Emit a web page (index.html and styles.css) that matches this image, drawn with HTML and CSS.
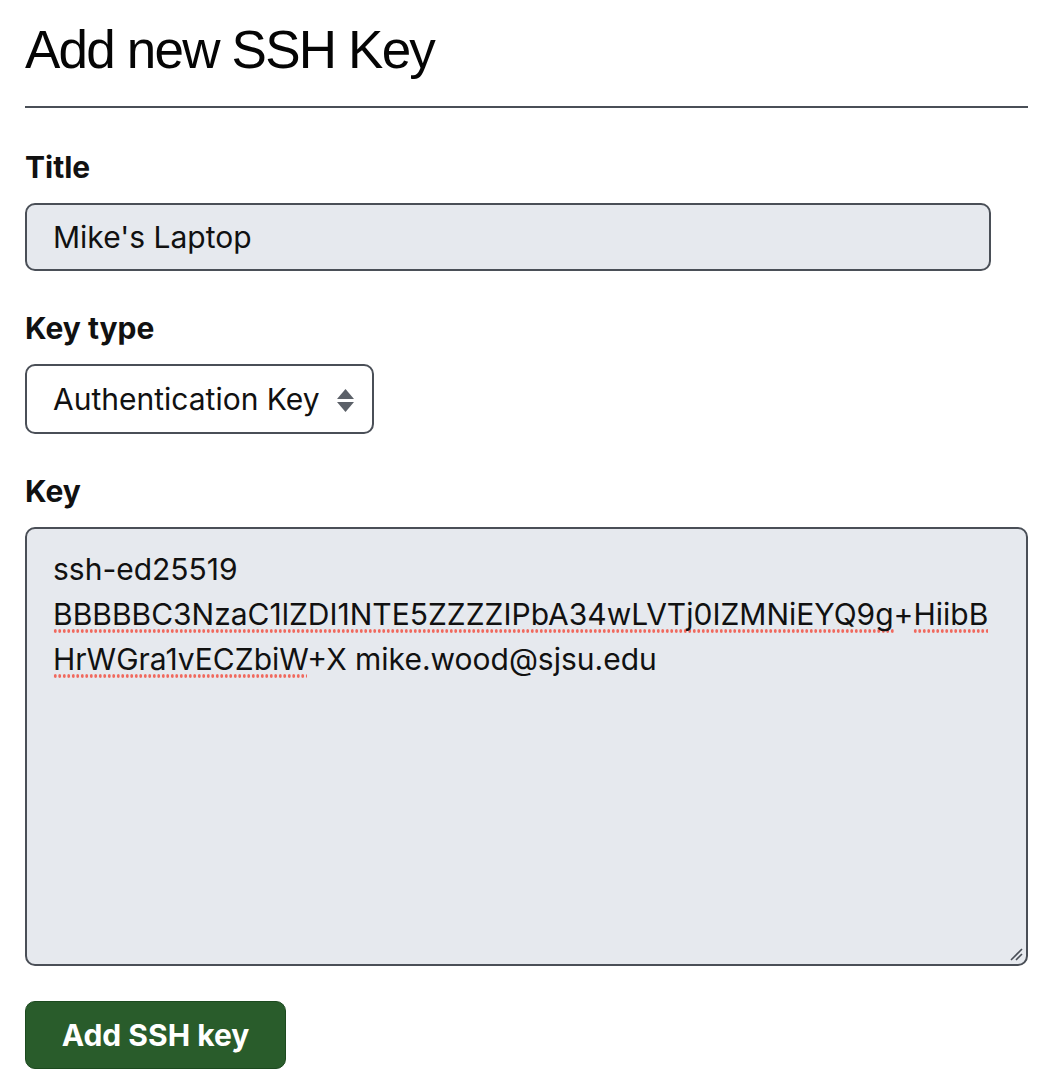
FILE: index.html
```html
<!DOCTYPE html>
<html lang="en">
<head>
<meta charset="utf-8">
<title>Add new SSH Key</title>
<link rel="stylesheet" href="styles.css">
</head>
<body>
<main class="page">
  <h1 class="heading">Add new SSH Key</h1>
  <form class="form">
    <div class="field">
      <label class="label">Title</label>
      <div class="input">Mike's Laptop</div>
    </div>
    <div class="field">
      <label class="label">Key type</label>
      <div class="select">
        <span class="select-text">Authentication Key</span>
        <svg class="select-arrows" width="17" height="23" viewBox="0 0 17 23" aria-hidden="true">
          <path d="M8.5 0 L17 10 L0 10 Z" fill="#5b6068"/>
          <path d="M0 13 L17 13 L8.5 23 Z" fill="#5b6068"/>
        </svg>
      </div>
    </div>
    <div class="field">
      <label class="label">Key</label>
      <div class="textarea">
        <div class="key-text">ssh-ed25519<br><span class="spell">BBBBBC3NzaC1lZDI1NTE5ZZZZIPbA34wLVTj0IZMNiEYQ9g</span>+<span class="spell">HiibB</span><br><span class="spell">HrWGra1vECZbiW</span>+X mike.wood@sjsu.edu</div>
        <svg class="grip" width="14" height="14" viewBox="0 0 14 14" aria-hidden="true">
          <line x1="2" y1="13" x2="13" y2="2" stroke="#4a4f57" stroke-width="1.6"/>
          <line x1="7" y1="13" x2="13" y2="7" stroke="#4a4f57" stroke-width="1.6"/>
        </svg>
      </div>
    </div>
    <div class="actions">
      <button type="button" class="btn">Add SSH key</button>
    </div>
  </form>
</main>
</body>
</html>
```

FILE: styles.css
```css
html, body {
  margin: 0;
  padding: 0;
  background: #ffffff;
}

body {
  font-family: Inter, "Liberation Sans", Arial, sans-serif;
  color: #111111;
}

.page {
  width: 1003px;
  margin-left: 25px;
  padding-top: 17px;
}

.heading {
  margin: 0;
  font-family: "Liberation Sans", Arial, sans-serif;
  font-size: 53px;
  font-weight: 400;
  line-height: 65px;
  padding-bottom: 24px;
  border-bottom: 2px solid #4a4f57;
  color: #050505;
  letter-spacing: -1.8px;
}

.form {
  display: flex;
  flex-direction: column;
  gap: 35px;
  padding-top: 37px;
}

.field {
  display: flex;
  flex-direction: column;
  gap: 13px;
}

.label {
  font-size: 30px;
  line-height: 45px;
  font-weight: 700;
  color: #111111;
}

.input {
  box-sizing: border-box;
  width: 966px;
  height: 68px;
  border: 2px solid #4a4f57;
  border-radius: 10px;
  background: #e6e9ee;
  padding: 10px 26px 9px;
  font-size: 30px;
  line-height: 45px;
  color: #111111;
}

.select {
  box-sizing: border-box;
  width: 349px;
  height: 70px;
  border: 2px solid #4a4f57;
  border-radius: 10px;
  background: #ffffff;
  padding: 0 18px 0 26px;
  display: flex;
  align-items: center;
  justify-content: space-between;
  font-size: 30px;
  line-height: 45px;
  color: #111111;
}

.select-arrows {
  flex: none;
  margin-top: 2px;
}

.textarea {
  position: relative;
  box-sizing: border-box;
  width: 1003px;
  height: 439px;
  border: 2px solid #4a4f57;
  border-radius: 10px;
  background: #e6e9ee;
  padding: 18px 26px;
}

.key-text {
  font-size: 30px;
  line-height: 45px;
  color: #111111;
  white-space: nowrap;
}

.spell {
  padding-bottom: 1px;
  background-image: radial-gradient(circle, #f0695e 1.4px, transparent 1.8px);
  background-repeat: repeat-x;
  background-position: left bottom;
  background-size: 4.5px 3.6px;
}

.grip {
  position: absolute;
  right: 3px;
  bottom: 3px;
}

.actions {
  display: flex;
}

.btn {
  box-sizing: border-box;
  height: 68px;
  width: 261px;
  border: 1.5px solid #1c4a1f;
  border-radius: 10px;
  background: #295c2b;
  color: #ffffff;
  font-family: Inter, "Liberation Sans", Arial, sans-serif;
  font-size: 30px;
  font-weight: 700;
  padding: 0;
  cursor: pointer;
}
```
